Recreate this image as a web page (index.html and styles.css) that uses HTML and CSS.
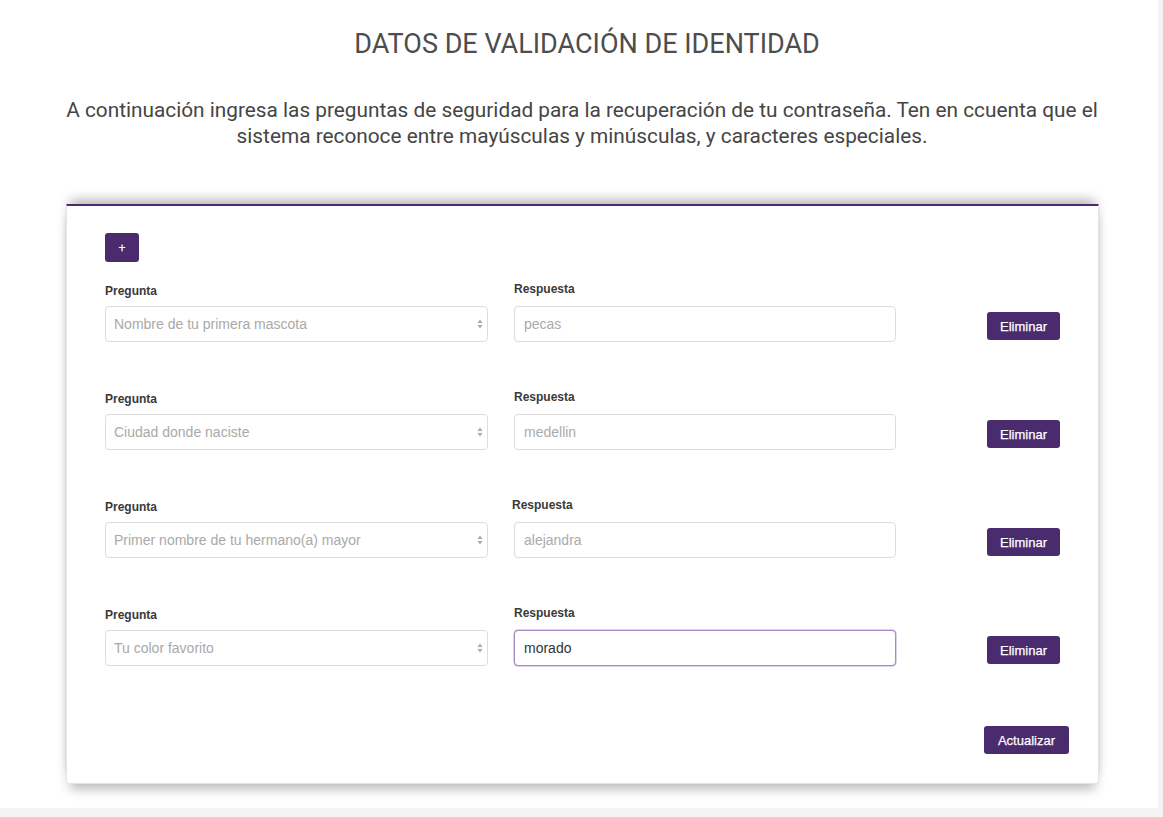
FILE: index.html
```html
<!DOCTYPE html>
<html lang="es">
<head>
<meta charset="utf-8">
<title>Datos de validación de identidad</title>
<link rel="stylesheet" href="styles.css">
</head>
<body>
<div class="page">
  <div class="content">
    <h1 class="title">DATOS DE VALIDACIÓN DE IDENTIDAD</h1>
    <p class="intro">A continuación ingresa las preguntas de seguridad para la recuperación de tu contraseña. Ten en ccuenta que el sistema reconoce entre mayúsculas y minúsculas, y caracteres especiales.</p>

    <div class="card">
      <button class="btn btn-add" type="button">+</button>

      <div class="qrow">
        <div class="field">
          <label class="label">Pregunta</label>
          <div class="select-wrap">
            <select class="control select"><option>Nombre de tu primera mascota</option></select>
            <svg class="arrows" width="6" height="10" viewBox="0 0 6 10"><path d="M3 0.5 L5.5 4 H0.5 Z M3 9.5 L5.5 6 H0.5 Z" fill="#a9a9a9"/></svg>
          </div>
        </div>
        <div class="field">
          <label class="label label-r">Respuesta</label>
          <input class="control" type="text" placeholder="pecas">
        </div>
        <div class="action"><button class="btn btn-del" type="button">Eliminar</button></div>
      </div>

      <div class="qrow">
        <div class="field">
          <label class="label">Pregunta</label>
          <div class="select-wrap">
            <select class="control select"><option>Ciudad donde naciste</option></select>
            <svg class="arrows" width="6" height="10" viewBox="0 0 6 10"><path d="M3 0.5 L5.5 4 H0.5 Z M3 9.5 L5.5 6 H0.5 Z" fill="#a9a9a9"/></svg>
          </div>
        </div>
        <div class="field">
          <label class="label label-r">Respuesta</label>
          <input class="control" type="text" placeholder="medellin">
        </div>
        <div class="action"><button class="btn btn-del" type="button">Eliminar</button></div>
      </div>

      <div class="qrow">
        <div class="field">
          <label class="label">Pregunta</label>
          <div class="select-wrap">
            <select class="control select"><option>Primer nombre de tu hermano(a) mayor</option></select>
            <svg class="arrows" width="6" height="10" viewBox="0 0 6 10"><path d="M3 0.5 L5.5 4 H0.5 Z M3 9.5 L5.5 6 H0.5 Z" fill="#a9a9a9"/></svg>
          </div>
        </div>
        <div class="field">
          <label class="label label-r3">Respuesta</label>
          <input class="control" type="text" placeholder="alejandra">
        </div>
        <div class="action"><button class="btn btn-del" type="button">Eliminar</button></div>
      </div>

      <div class="qrow">
        <div class="field">
          <label class="label">Pregunta</label>
          <div class="select-wrap">
            <select class="control select"><option>Tu color favorito</option></select>
            <svg class="arrows" width="6" height="10" viewBox="0 0 6 10"><path d="M3 0.5 L5.5 4 H0.5 Z M3 9.5 L5.5 6 H0.5 Z" fill="#a9a9a9"/></svg>
          </div>
        </div>
        <div class="field">
          <label class="label label-r">Respuesta</label>
          <input class="control control-focus" type="text" value="morado">
        </div>
        <div class="action"><button class="btn btn-del" type="button">Eliminar</button></div>
      </div>

      <div class="footer">
        <button class="btn btn-update" type="button">Actualizar</button>
      </div>
    </div>
  </div>
</div>
</body>
</html>
```
FILE: styles.css
```css
html, body {
  margin: 0;
  padding: 0;
}
body {
  background: #f3f3f3;
  font-family: Roboto, "Liberation Sans", Arial, sans-serif;
}
.page {
  width: 1158px;
  height: 808px;
  background: #ffffff;
  box-sizing: border-box;
  padding-top: 29px;
  overflow: hidden;
}
.content {
  width: 1033px;
  margin-left: 66px;
}
.title {
  margin: 0;
  padding-left: 9px;
  text-align: center;
  font-family: Roboto, sans-serif;
  font-weight: 400;
  font-size: 27px;
  line-height: 30px;
  color: #4d4d4d;
}
.intro {
  width: 1050px;
  margin: 38px -8px 0 -9px;
  text-align: center;
  font-family: Roboto, sans-serif;
  font-size: 20.8px;
  line-height: 26px;
  color: #454545;
}
.card {
  margin-top: 55px;
  background: #fff;
  border: 1px solid #e4e4e4;
  border-top: 2px solid #4a2b6e;
  border-radius: 0 0 3px 3px;
  padding: 27px 38px 29px 38px;
  box-shadow: 0 -8px 11px -4px rgba(0, 0, 0, 0.3), 0 9px 11px -4px rgba(0, 0, 0, 0.28);
  font-family: "Liberation Sans", Arial, sans-serif;
}
.btn {
  display: inline-flex;
  align-items: center;
  justify-content: center;
  background: #4a2b6e;
  color: #fff;
  border: 0;
  border-radius: 3px;
  font-family: "Liberation Sans", Arial, sans-serif;
  font-size: 13px;
  padding: 0;
  cursor: pointer;
  -webkit-text-stroke: 0.25px #fff;
}
.btn-add {
  width: 34px;
  height: 29px;
  font-size: 12px;
  display: flex;
}
.qrow {
  display: grid;
  grid-template-columns: 383px 382px 1fr;
  column-gap: 26px;
  margin-top: 21px;
}
.qrow + .qrow {
  margin-top: 49px;
}
.field {
  display: flex;
  flex-direction: column;
}
.label {
  display: block;
  font-size: 12px;
  line-height: 16px;
  font-weight: 700;
  color: #3a3a3a;
  margin-bottom: 7px;
}
.label-r {
  margin-top: -2px;
  margin-bottom: 9px;
}
.label-r3 {
  margin-top: -2px;
  margin-bottom: 9px;
  margin-left: -2px;
}
.control {
  box-sizing: border-box;
  width: 100%;
  height: 36px;
  border: 1px solid #dcdcdc;
  border-radius: 4px;
  padding: 0 9px;
  font-family: "Liberation Sans", Arial, sans-serif;
  font-size: 14px;
  color: #333;
  background: #fff;
  outline: none;
}
.control::placeholder {
  color: #ababab;
}
.control-focus {
  border: 1px solid #a58bc6;
  box-shadow: 0 0 0 0.5px #b9a3d6;
}
.select-wrap {
  position: relative;
}
.select {
  appearance: none;
  -webkit-appearance: none;
  color: #a9a9a9;
  padding-left: 8px;
}
.arrows {
  position: absolute;
  right: 5px;
  top: 13px;
  pointer-events: none;
}
.action {
  display: flex;
  justify-content: flex-end;
  align-items: flex-end;
  padding-bottom: 2px;
}
.btn-del {
  width: 73px;
  height: 28px;
}
.footer {
  display: flex;
  justify-content: flex-end;
  margin-top: 60px;
  margin-right: -9px;
}
.btn-update {
  width: 85px;
  height: 28px;
}
```
